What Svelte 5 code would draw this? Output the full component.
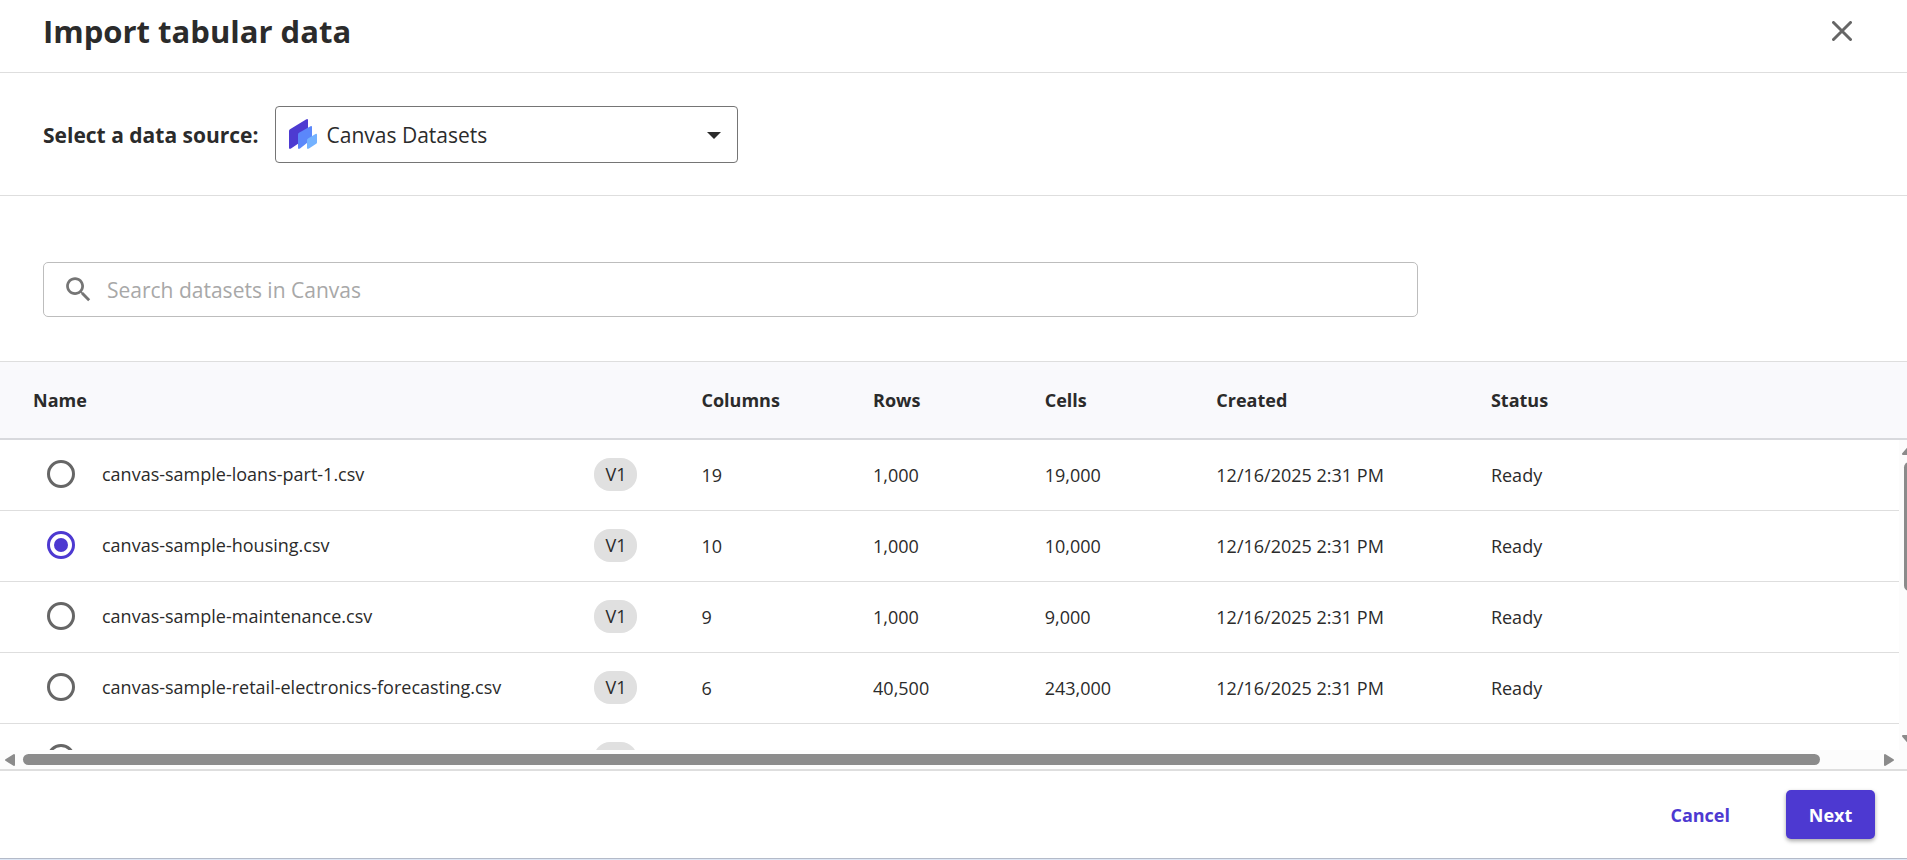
<script lang="ts">
	type Dataset = {
		name: string;
		version: string;
		columns: number;
		rows: number;
		cells: number;
		created: string;
		status: string;
	};

	const created = '12/16/2025 2:31 PM';

	const datasets: Dataset[] = [
		{ name: 'canvas-sample-loans-part-1.csv', version: 'V1', columns: 19, rows: 1000, cells: 19000, created, status: 'Ready' },
		{ name: 'canvas-sample-housing.csv', version: 'V1', columns: 10, rows: 1000, cells: 10000, created, status: 'Ready' },
		{ name: 'canvas-sample-maintenance.csv', version: 'V1', columns: 9, rows: 1000, cells: 9000, created, status: 'Ready' },
		{ name: 'canvas-sample-retail-electronics-forecasting.csv', version: 'V1', columns: 6, rows: 40500, cells: 243000, created, status: 'Ready' },
		{ name: '', version: '', columns: 0, rows: 0, cells: 0, created: '', status: '' }
	];

	let source = $state('canvas');
	let query = $state('');
	let selected = $state('canvas-sample-housing.csv');

	const visible = $derived(datasets.filter((d) => d.name.includes(query.trim().toLowerCase())));

	function format(n: number) {
		return n ? n.toLocaleString('en-US') : '';
	}
</script>

<div class="dialog">
	<header class="titlebar">
		<h1>Import tabular data</h1>
		<button class="close" type="button" aria-label="Close">
			<svg width="20" height="20" viewBox="0 0 20 20" aria-hidden="true">
				<path d="M1.5 1.5 18.5 18.5M18.5 1.5 1.5 18.5" />
			</svg>
		</button>
	</header>

	<section class="source">
		<label for="source">Select a data source:</label>
		<div class="select">
			<svg class="logo" width="28" height="30" viewBox="0 0 28 30" aria-hidden="true">
				<path fill="#4d3bd1" d="M0 12q0-1.200 1-1.800L17 .4q2-1 2 .8V18L2 29.600q-2 1-2-.8z" />
				<path fill="#5b87fa" d="M9 15.500q0-1.200 1-1.800L21.500 7.200q1.500-.6 1.500.8V20L11 29.400q-2 1.200-2-.6z" />
				<path fill="#74b2ff" d="M18 21q0-1 1-1.600L26.500 15q1.500-.7 1.500.8v7.700q0 .8-.8 1.300L20 29.400q-2 1.200-2-.6z" />
			</svg>
			<select id="source" bind:value={source}>
				<option value="canvas">Canvas Datasets</option>
			</select>
			<svg class="caret" width="14" height="7" viewBox="0 0 14 7" aria-hidden="true">
				<path d="M0 0h14L7 7z" fill="#2b2b2b" />
			</svg>
		</div>
	</section>

	<section class="search">
		<div class="field">
			<svg width="33" height="33" viewBox="0 0 24 24" aria-hidden="true">
				<path
					fill="#757575"
					d="M15.500 14h-.79l-.28-.27C15.410 12.590 16 11.110 16 9.500 16 5.910 13.090 3 9.500 3S3 5.910 3 9.500 5.910 16 9.500 16c1.610 0 3.090-.59 4.230-1.570l.27.28v.79l5 4.990L20.490 19l-4.990-5zm-6 0C7.010 14 5 11.990 5 9.500S7.010 5 9.500 5 14 7.010 14 9.500 11.990 14 9.500 14z"
				/>
			</svg>
			<input
				type="text"
				aria-label="Search datasets"
				placeholder="Search datasets in Canvas"
				bind:value={query}
			/>
		</div>
	</section>

	<section class="list">
		<div class="viewport">
			<table>
				<thead>
					<tr>
						<th class="name">Name</th>
						<th class="num">Columns</th>
						<th class="num">Rows</th>
						<th class="num">Cells</th>
						<th class="created">Created</th>
						<th>Status</th>
					</tr>
				</thead>
				<tbody>
					{#each visible as dataset (dataset.name)}
						<tr>
							<td class="name">
								<label>
									<input type="radio" name="dataset" value={dataset.name} bind:group={selected} />
									<span class="filename">{dataset.name}</span>
									<span class="version">{dataset.version}</span>
								</label>
							</td>
							<td>{format(dataset.columns)}</td>
							<td>{format(dataset.rows)}</td>
							<td>{format(dataset.cells)}</td>
							<td>{dataset.created}</td>
							<td>{dataset.status}</td>
						</tr>
					{/each}
				</tbody>
			</table>
			<div class="vbar" aria-hidden="true">
				<svg width="14" height="9" viewBox="0 0 14 9"><path d="M7 1 13 8H1z" /></svg>
				<div class="vthumb"></div>
				<svg width="14" height="9" viewBox="0 0 14 9"><path d="M7 8 13 1H1z" /></svg>
			</div>
		</div>
		<div class="hbar" aria-hidden="true">
			<svg width="10" height="14" viewBox="0 0 10 14"><path d="M1 7 9 2v10z" /></svg>
			<div class="htrack">
				<div class="hthumb"></div>
			</div>
			<svg width="10" height="14" viewBox="0 0 10 14"><path d="M9 7 1 2v10z" /></svg>
		</div>
	</section>

	<footer>
		<button class="cancel" type="button">Cancel</button>
		<button class="next" type="button">Next</button>
	</footer>
</div>

<style>
	:global(body) {
		margin: 0;
		background: #fff;
	}

	.dialog {
		display: flex;
		flex-direction: column;
		box-sizing: border-box;
		height: 100vh;
		overflow: hidden;
		border-bottom: 1px solid #dce6f5;
		color: #2b2b2b;
		font-family: 'Segoe UI', 'Open Sans', 'Noto Sans', sans-serif;
		font-size: 18px;
	}

	button,
	input,
	select {
		font: inherit;
		color: inherit;
	}

	.titlebar {
		display: flex;
		align-items: center;
		justify-content: space-between;
		height: 62px;
		padding: 0 43px 10px;
		border-bottom: 1px solid #dedede;
	}

	h1 {
		margin: 0;
		font-size: 31px;
		font-weight: 700;
		line-height: 40px;
	}

	.close {
		display: grid;
		place-items: center;
		width: 44px;
		height: 44px;
		padding: 0;
		border: 0;
		background: none;
		cursor: pointer;
	}

	.close path {
		fill: none;
		stroke: #666;
		stroke-width: 3;
		stroke-linecap: round;
	}

	.source {
		display: flex;
		align-items: center;
		gap: 16px;
		padding: 33px 43px 32px;
		border-bottom: 1px solid #dedede;
	}

	.source > label {
		font-size: 21px;
		font-weight: 700;
	}

	.select {
		position: relative;
		width: 463px;
	}

	.select select {
		display: block;
		box-sizing: border-box;
		width: 100%;
		height: 57px;
		padding: 0 48px 0 51px;
		border: 1px solid #757575;
		border-radius: 4px;
		background: none;
		font-size: 21px;
		appearance: none;
	}

	.logo,
	.caret {
		position: absolute;
		pointer-events: none;
	}

	.logo {
		top: 13px;
		left: 14px;
	}

	.caret {
		top: 26px;
		right: 17px;
	}

	.search {
		padding: 66px 43px 44px;
	}

	.field {
		display: flex;
		align-items: center;
		gap: 12px;
		box-sizing: border-box;
		width: 1375px;
		max-width: 100%;
		height: 55px;
		padding: 0 18px;
		border: 1px solid #bdbdbd;
		border-radius: 5px;
	}

	.field input {
		flex: 1;
		min-width: 0;
		padding: 0;
		border: 0;
		outline: 0;
		background: none;
		font-size: 21px;
	}

	.field input::placeholder {
		color: #a8a8a8;
		opacity: 1;
	}

	.list {
		display: flex;
		flex: 1;
		flex-direction: column;
		min-height: 0;
		border-top: 1px solid #dedede;
		border-bottom: 2px solid #dedede;
	}

	.viewport {
		position: relative;
		flex: 1;
		min-height: 0;
		overflow: hidden;
	}

	table {
		width: 100%;
		border-collapse: separate;
		border-spacing: 0;
		table-layout: fixed;
	}

	th,
	td {
		box-sizing: border-box;
		padding: 0 0 0 34px;
		text-align: left;
		white-space: nowrap;
	}

	th {
		height: 78px;
		border-bottom: 2px solid #d8d9dd;
		background: #f9f9fc;
		font-weight: 700;
	}

	td {
		height: 71px;
		border-bottom: 1px solid #dedede;
	}

	th.name {
		width: 35%;
		padding-left: 33px;
	}

	th.num {
		width: 9%;
	}

	th.created {
		width: 14.4%;
	}

	td.name {
		padding: 0 30px 2px 47px;
	}

	td label {
		display: flex;
		align-items: center;
	}

	input[type='radio'] {
		display: grid;
		flex: none;
		place-items: center;
		box-sizing: border-box;
		width: 28px;
		height: 28px;
		margin: 0 27px 0 0;
		border: 3px solid #666;
		border-radius: 50%;
		appearance: none;
	}

	input[type='radio']:checked {
		border-color: #4d39d1;
	}

	input[type='radio']:checked::before {
		content: '';
		width: 14px;
		height: 14px;
		border-radius: 50%;
		background: #4d39d1;
	}

	.filename {
		flex: 1;
	}

	.version {
		box-sizing: border-box;
		width: 43px;
		height: 33px;
		border-radius: 16px;
		background: #e0e0e0;
		line-height: 33px;
		text-align: center;
	}

	.vbar {
		position: absolute;
		top: 78px;
		right: -12px;
		bottom: 0;
		display: flex;
		flex-direction: column;
		align-items: center;
		box-sizing: border-box;
		width: 20px;
		padding: 6px 0;
		background: #fcfcfc;
	}

	.vthumb {
		width: 11px;
		height: 129px;
		margin: 7px 0 auto;
		border-radius: 6px;
		background: #8b8b8b;
	}

	.vbar path,
	.hbar path {
		fill: #8b8b8b;
		stroke: #8b8b8b;
		stroke-width: 2;
		stroke-linejoin: round;
	}

	.hbar {
		display: flex;
		align-items: center;
		gap: 8px;
		height: 19px;
		padding: 0 13px 0 5px;
		background: #fcfcfc;
	}

	.htrack {
		flex: 1;
	}

	.hthumb {
		width: 97%;
		height: 11px;
		border-radius: 6px;
		background: #8b8b8b;
	}

	footer {
		display: flex;
		align-items: center;
		justify-content: flex-end;
		gap: 32px;
		height: 87px;
		padding: 0 32px;
		border-bottom: 1px solid #b4bac8;
	}

	footer button {
		height: 49px;
		border: 0;
		border-radius: 5px;
		font-weight: 700;
		cursor: pointer;
	}

	.cancel {
		padding: 0 24px;
		background: none;
		color: #4d39d1;
	}

	.next {
		min-width: 89px;
		background: #4d39d1;
		box-shadow: 0 2px 4px rgb(0 0 0 / 35%);
		color: #fff;
	}
</style>
